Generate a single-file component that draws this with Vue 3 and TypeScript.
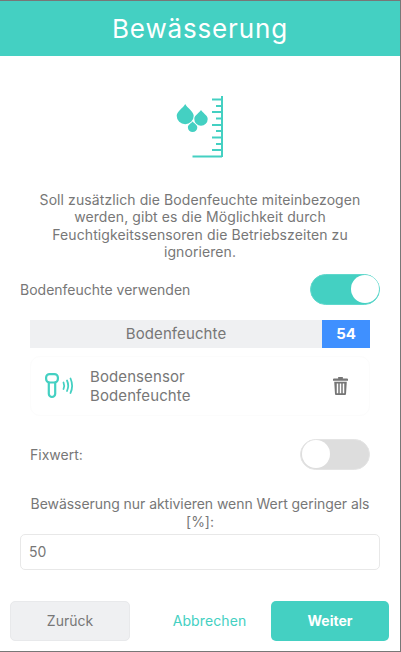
<script setup lang="ts">
const ticks: { y: number; x: number }[] = [
  { y: 99.5, x: 212 }, { y: 106, x: 216 }, { y: 112, x: 212 }, { y: 118.5, x: 216 }, { y: 125, x: 212 },
  { y: 131, x: 216 }, { y: 137.5, x: 212 }, { y: 144, x: 216 }, { y: 150, x: 212 },
]
</script>

<template>
  <div class="screen">
    <header class="head">Bewässerung</header>
    <div class="hero">
      <svg class="hero-icon" width="100" height="90" viewBox="150 80 100 90" fill="none">
        <path d="M185.200 104c2 4 8.500 7.500 8.500 11.800a8.500 8.500 0 0 1-17 0c0-4.300 6.500-7.800 8.500-11.800z" fill="#44d0c2" />
        <path d="M201 110c1.500 3 6.700 5 6.700 9a6.700 6.700 0 0 1-13.400 0c0-4 5.200-6 6.700-9z" fill="#44d0c2" />
        <path d="M192.600 121.500c1 1.500 4.700 3 4.700 5.900a4.700 4.700 0 0 1-9.400 0c0-2.900 3.700-4.400 4.700-5.900z" fill="#44d0c2" stroke="#fff" stroke-width="1" paint-order="stroke" />
        <g stroke="#44d0c2" stroke-width="2">
          <path d="M222 96v61M192.500 156.500H222" />
          <path v-for="t in ticks" :key="t.y" :d="`M${t.x} ${t.y}H222`" />
        </g>
      </svg>
    </div>
    <p class="intro">Soll zusätzlich die Bodenfeuchte miteinbezogen werden, gibt es die Möglichkeit durch Feuchtigkeitssensoren die Betriebszeiten zu ignorieren.</p>
    <div class="row use">
      <span>Bodenfeuchte verwenden</span>
      <div class="toggle on"><i></i></div>
    </div>
    <div class="value-bar">
      <span class="value-name">Bodenfeuchte</span>
      <span class="value-num">54</span>
    </div>
    <div class="sensor">
      <svg class="sensor-icon" width="32" height="26" viewBox="0 0 32 26" fill="none" stroke="#44d0c2" stroke-width="2.200" stroke-linecap="round">
        <rect x="1.100" y="1.100" width="11.800" height="8.400" rx="3.500" />
        <path d="M3.800 9.500v11.300a3.200 3.200 0 0 0 6.400 0V9.500" />
        <path d="M18.500 9.500q1.400 3.200 0 6.500M22 7.500q2.400 5.200 0 10.500M25.500 5.500q3.200 7.200 0 14.500" stroke-width="1.800" />
      </svg>
      <div class="sensor-text">Bodensensor<br />Bodenfeuchte</div>
      <svg class="trash" width="15" height="18.500" viewBox="0 0 16 20" preserveAspectRatio="none" fill="#757575">
        <path d="M5.500 0h5v1.500h4.500a1 1 0 0 1 1 1V4H0V2.500a1 1 0 0 1 1-1h4.500z" />
        <path fill-rule="evenodd" d="M1.300 5h13.400l-.8 13.200a1.500 1.500 0 0 1-1.500 1.400H3.600a1.500 1.500 0 0 1-1.500-1.400zM4 7v10.500h1.600V7zm3.200 0v10.500h1.600V7zm3.200 0v10.500H12V7z" />
      </svg>
    </div>
    <div class="row fix">
      <span>Fixwert:</span>
      <div class="toggle"><i></i></div>
    </div>
    <p class="limit">Bewässerung nur aktivieren wenn Wert geringer als [%]:</p>
    <div class="field">50</div>
    <div class="actions">
      <button class="btn back">Zurück</button>
      <button class="btn cancel">Abbrechen</button>
      <button class="btn next">Weiter</button>
    </div>
  </div>
</template>

<style>
html, body { margin: 0; background: #fff; }
</style>

<style scoped>
.screen {
  box-sizing: border-box;
  width: 401px;
  height: 652px;
  display: flex;
  flex-direction: column;
  border: 1px solid #777;
  border-left: 0;
  font-family: Inter, "Noto Sans", sans-serif;
  color: #777;
  font-size: 14px;
  overflow: hidden;
}
.head {
  height: 55px;
  flex: none;
  background: #44d0c2;
  color: #fff;
  font-size: 26px;
  line-height: 55px;
  text-align: center;
  letter-spacing: .85px;
}
.hero { height: 135px; flex: none; padding-top: 24px; box-sizing: border-box; display: flex; justify-content: center; }
.hero-icon { display: block; }
.intro { margin: 0; padding: 0 30px; line-height: 17.400px; text-align: center; height: 69.600px; font-size: 14px; letter-spacing: .09px; }
.row { display: flex; justify-content: space-between; align-items: center; }
.use { margin-top: 13px; padding: 0 20px; height: 31px; }
.toggle {
  width: 70px;
  height: 31px;
  box-sizing: border-box;
  border-radius: 16px;
  background: #ddd;
  border: 1px solid #e4e4e4;
  padding: .5px;
  display: flex;
}
.toggle.on { background: #44d0c2; border-color: #5fd8cc; justify-content: flex-end; }
.toggle i { width: 28px; height: 28px; border-radius: 50%; background: #fff; display: block; }
.value-bar { margin: 15.400px 30px 0; height: 28px; display: flex; background: #eff0f2; flex: none; }
.value-name { flex: 1; text-align: center; line-height: 28px; font-size: 15px; letter-spacing: .1px; }
.value-num { width: 48px; background: #3f90ff; color: #fff; font-weight: 700; text-align: center; line-height: 28px; font-size: 15px; }
.sensor { margin: 8px 30px 0; height: 60px; box-sizing: border-box; border: 1px solid #fcfcfc; display: flex; align-items: center; border-radius: 10px; flex: none; }
.sensor-icon { margin-left: 14px; flex: none; }
.sensor-text { margin-left: 13px; flex: 1; font-size: 15px; line-height: 19px; letter-spacing: .1px; }
.trash { margin-right: 21px; flex: none; }
.fix { margin: 23px 30px 0; height: 31px; }
.limit { margin: 25px 0 0; padding: 0 28px; line-height: 18px; text-align: center; font-size: 14px; letter-spacing: -.05px; }
.field {
  margin: 3px 20px 0;
  height: 36px;
  box-sizing: border-box;
  border: 1px solid #e8e8e8;
  border-radius: 5px;
  padding: 0 8px;
  line-height: 34px;
  font-size: 14px;
  flex: none;
}
.actions { margin: 31px 11px 0 10px; display: flex; justify-content: space-between; align-items: center; }
.btn { height: 40px; border: 0; border-radius: 5px; font-family: inherit; font-size: 14px; padding: 0; }
.back { width: 120px; background: #eff0f2; color: #777; border: 1px solid #e8e9eb; }
.cancel { background: none; color: #44d0c2; width: 108px; padding-left: 18px; letter-spacing: .1px; }
.next { width: 118px; background: #44d0c2; color: #fff; font-weight: 700; }
</style>
